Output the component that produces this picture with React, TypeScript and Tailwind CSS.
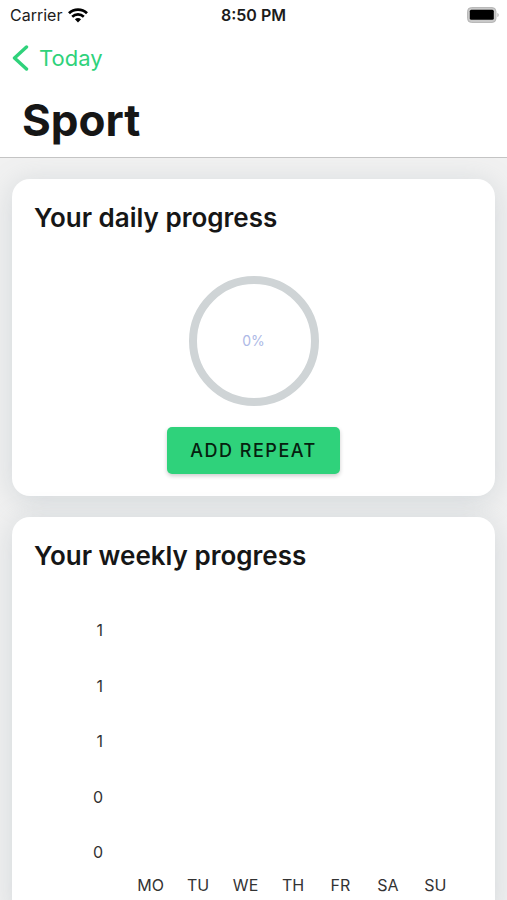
import type { ReactNode } from 'react';

const ticks = ['1', '1', '1', '0', '0'];
const days = ['MO', 'TU', 'WE', 'TH', 'FR', 'SA', 'SU'];

function WifiIcon() {
  return (
    <svg viewBox="0 0 20 15" className="h-[15px] w-5" fill="none" stroke="#000" aria-hidden="true">
      <path d="M1 5.2a13 13 0 0 1 18 0" strokeWidth="2.8" />
      <path d="M4.2 8.7a8.4 8.4 0 0 1 11.6 0" strokeWidth="2.6" />
      <path d="M6.9 11.3a4.6 4.6 0 0 1 6.2 0L10 14.6z" fill="#000" stroke="none" />
    </svg>
  );
}

function BatteryIcon() {
  return (
    <svg viewBox="0 0 33 16" className="h-4 w-[33px]" aria-hidden="true">
      <rect x="0.5" y="0.5" width="28.5" height="15" rx="4" fill="#c9c9c9" stroke="#adadad" strokeWidth="0.8" />
      <rect x="2.8" y="2.8" width="24" height="10" rx="1.5" fill="#000" />
      <path d="M30.5 6c1.4.4 1.4 3.6 0 4z" fill="#a6a6a6" />
    </svg>
  );
}

function StatusBar() {
  return (
    <div className="grid h-[30px] grid-cols-3 items-center text-[#1c1c1c]">
      <div className="flex items-center gap-[6px] pl-[10px] text-base">
        <span>Carrier</span>
        <WifiIcon />
      </div>
      <span className="text-center text-base font-semibold">8:50 PM</span>
      <div className="flex justify-end pr-[7px]">
        <BatteryIcon />
      </div>
    </div>
  );
}

function Card({ title, children }: { title: string; children: ReactNode }) {
  return (
    <section className="rounded-[18px] bg-white p-[22px] shadow-[0_4px_28px_rgba(120,140,150,0.25)]">
      <h2 className="text-[26px] leading-[33px] font-semibold text-[#161616]">{title}</h2>
      {children}
    </section>
  );
}

export default function App() {
  return (
    <div className="flex h-screen flex-col bg-[#f1f1f1] font-[Inter,sans-serif]">
      <header className="relative z-10 border-b border-[#c4c4c4] bg-white">
        <StatusBar />
        <a href="#today" className="flex h-14 items-center gap-[10px] pl-3 text-[22px] text-[#2fd27b]">
          <svg viewBox="0 0 17 26" className="h-[26px] w-[17px]" fill="none" aria-hidden="true">
            <path d="M14.5 2 2.5 13l12 11" stroke="currentColor" strokeWidth="3.4" strokeLinecap="round" strokeLinejoin="round" />
          </svg>
          Today
        </a>
        <h1 className="h-[71px] px-[22px] pt-[7px] text-[44px] leading-[54px] font-bold text-[#161616]">Sport</h1>
      </header>

      <main className="flex-1 overflow-y-auto [scrollbar-width:none]">
        <div className="flex flex-col gap-[21px] px-3 py-[21px]">
          {/* Daily ring */}
          <Card title="Your daily progress">
            <div className="mt-[42px] flex flex-col items-center gap-[21px]">
              <div className="flex size-[130px] items-center justify-center rounded-full border-8 border-[#cfd4d6] text-sm text-[#adb9e6]">
                0%
              </div>
              <button
                type="button"
                className="h-[47px] rounded-[5px] bg-[#2fd27b] px-[23px] text-lg font-medium tracking-[1.5px] text-[#06200f] shadow-[0_2px_4px_rgba(0,0,0,0.2)]"
              >
                ADD REPEAT
              </button>
            </div>
          </Card>

          {/* Weekly chart */}
          <Card title="Your weekly progress">
            <div className="mt-12 flex gap-6 pr-[14px] text-base leading-5 text-[#333]">
              <div className="flex h-[242px] w-[69px] flex-col justify-between text-right">
                {ticks.map((tick, i) => (
                  <span key={i}>{tick}</span>
                ))}
              </div>
              <div className="grid flex-1 grid-cols-7 pt-[255px] text-center">
                {days.map((day) => (
                  <span key={day}>{day}</span>
                ))}
              </div>
            </div>
          </Card>
        </div>
      </main>
    </div>
  );
}
